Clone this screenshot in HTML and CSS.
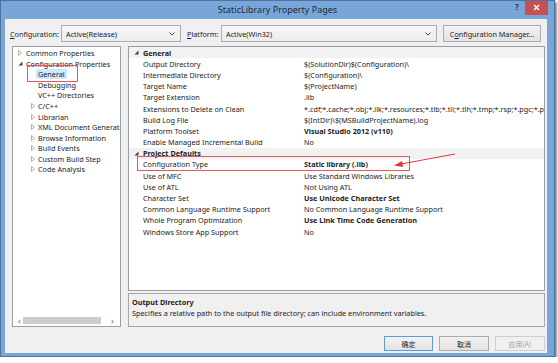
FILE: index.html
```html
<!DOCTYPE html>
<html>
  <head>
    <meta charset="utf-8" />
    <title>StaticLibrary Property Pages</title>
    <link rel="stylesheet" href="styles.css">
  </head>
  <body>
    <div class="window">
      <div class="titlebar">
        <span class="title">StaticLibrary Property Pages</span>
        <div class="caption-btns">
          <span class="help">?</span>
          <span class="close">
            <svg width="7" height="7" viewBox="0 0 7 7"><path d="M1 1L6 6M6 1L1 6" stroke="#fff" stroke-width="1.4"/></svg>
          </span>
        </div>
      </div>

      <div class="client">
        <!-- configuration / platform bar -->
        <div class="toolbar">
          <span class="lbl lbl-config"><u>C</u>onfiguration:</span>
          <div class="combo combo-config">
            <span>Active(Release)</span>
            <svg class="chev" width="6" height="4" viewBox="0 0 6 4"><path d="M0.5 0.5L3 3L5.5 0.5" fill="none" stroke="#555" stroke-width="1"/></svg>
          </div>
          <span class="lbl lbl-platform"><u>P</u>latform:</span>
          <div class="combo combo-platform">
            <span>Active(Win32)</span>
            <svg class="chev" width="6" height="4" viewBox="0 0 6 4"><path d="M0.5 0.5L3 3L5.5 0.5" fill="none" stroke="#555" stroke-width="1"/></svg>
          </div>
          <button class="btn btn-manager">C<u>o</u>nfiguration Manager...</button>
        </div>

        <div class="main">
          <!-- left tree -->
          <div class="tree">
            <ul class="tree-list">
              <li class="lvl0"><span class="tog"><svg width="4" height="6" viewBox="0 0 4 6"><path d="M0.5 0.5L3.5 3L0.5 5.5Z" fill="none" stroke="#a8a8a8" stroke-width="0.9"/></svg></span>Common Properties</li>
              <li class="lvl0"><span class="tog"><svg width="5" height="5" viewBox="0 0 5 5"><path d="M4.5 0.5L4.5 4.5L0.5 4.5Z" fill="#404040"/></svg></span>Configuration Properties</li>
              <li class="lvl1"><span class="tog"></span><span class="selected">General</span></li>
              <li class="lvl1"><span class="tog"></span>Debugging</li>
              <li class="lvl1"><span class="tog"></span>VC++ Directories</li>
              <li class="lvl1"><span class="tog"><svg width="4" height="6" viewBox="0 0 4 6"><path d="M0.5 0.5L3.5 3L0.5 5.5Z" fill="none" stroke="#a8a8a8" stroke-width="0.9"/></svg></span>C/C++</li>
              <li class="lvl1"><span class="tog"><svg width="4" height="6" viewBox="0 0 4 6"><path d="M0.5 0.5L3.5 3L0.5 5.5Z" fill="none" stroke="#a8a8a8" stroke-width="0.9"/></svg></span>Librarian</li>
              <li class="lvl1"><span class="tog"><svg width="4" height="6" viewBox="0 0 4 6"><path d="M0.5 0.5L3.5 3L0.5 5.5Z" fill="none" stroke="#a8a8a8" stroke-width="0.9"/></svg></span>XML Document Generator</li>
              <li class="lvl1"><span class="tog"><svg width="4" height="6" viewBox="0 0 4 6"><path d="M0.5 0.5L3.5 3L0.5 5.5Z" fill="none" stroke="#a8a8a8" stroke-width="0.9"/></svg></span>Browse Information</li>
              <li class="lvl1"><span class="tog"><svg width="4" height="6" viewBox="0 0 4 6"><path d="M0.5 0.5L3.5 3L0.5 5.5Z" fill="none" stroke="#a8a8a8" stroke-width="0.9"/></svg></span>Build Events</li>
              <li class="lvl1"><span class="tog"><svg width="4" height="6" viewBox="0 0 4 6"><path d="M0.5 0.5L3.5 3L0.5 5.5Z" fill="none" stroke="#a8a8a8" stroke-width="0.9"/></svg></span>Custom Build Step</li>
              <li class="lvl1"><span class="tog"><svg width="4" height="6" viewBox="0 0 4 6"><path d="M0.5 0.5L3.5 3L0.5 5.5Z" fill="none" stroke="#a8a8a8" stroke-width="0.9"/></svg></span>Code Analysis</li>
            </ul>
            <div class="hscroll">
              <span class="arrow">&lsaquo;</span>
              <span class="track"><span class="thumb"></span></span>
              <span class="arrow">&rsaquo;</span>
            </div>
            <span class="mark mark-general"></span>
          </div>

          <div class="right">
            <!-- property grid -->
            <div class="grid">
              <div class="cat"><span class="tog"><svg width="5" height="5" viewBox="0 0 5 5"><path d="M4.5 0.5L4.5 4.5L0.5 4.5Z" fill="#404040"/></svg></span>General</div>
              <div class="row"><span class="name">Output Directory</span><span class="val">$(SolutionDir)$(Configuration)\</span></div>
              <div class="row"><span class="name">Intermediate Directory</span><span class="val">$(Configuration)\</span></div>
              <div class="row"><span class="name">Target Name</span><span class="val">$(ProjectName)</span></div>
              <div class="row"><span class="name">Target Extension</span><span class="val">.lib</span></div>
              <div class="row"><span class="name">Extensions to Delete on Clean</span><span class="val">*.cdf;*.cache;*.obj;*.ilk;*.resources;*.tlb;*.tli;*.tlh;*.tmp;*.rsp;*.pgc;*.pgd;*.meta</span></div>
              <div class="row"><span class="name">Build Log File</span><span class="val">$(IntDir)\$(MSBuildProjectName).log</span></div>
              <div class="row"><span class="name">Platform Toolset</span><span class="val bold">Visual Studio 2012 (v110)</span></div>
              <div class="row"><span class="name">Enable Managed Incremental Build</span><span class="val">No</span></div>
              <div class="cat"><span class="tog"><svg width="5" height="5" viewBox="0 0 5 5"><path d="M4.5 0.5L4.5 4.5L0.5 4.5Z" fill="#404040"/></svg></span>Project Defaults</div>
              <div class="row"><span class="name">Configuration Type</span><span class="val bold">Static library (.lib)</span></div>
              <div class="row"><span class="name">Use of MFC</span><span class="val">Use Standard Windows Libraries</span></div>
              <div class="row"><span class="name">Use of ATL</span><span class="val">Not Using ATL</span></div>
              <div class="row"><span class="name">Character Set</span><span class="val bold">Use Unicode Character Set</span></div>
              <div class="row"><span class="name">Common Language Runtime Support</span><span class="val">No Common Language Runtime Support</span></div>
              <div class="row"><span class="name">Whole Program Optimization</span><span class="val bold">Use Link Time Code Generation</span></div>
              <div class="row"><span class="name">Windows Store App Support</span><span class="val">No</span></div>

              <span class="mark mark-type"></span>
              <svg class="arrow-note" width="340" height="130" viewBox="0 0 340 130">
                <path d="M326 107L272 117" stroke="#e0383c" stroke-width="1"/>
                <path d="M265 118.5L273 114L274 120Z" fill="#e0383c"/>
              </svg>
            </div>
            <div class="desc">
              <div class="desc-title">Output Directory</div>
              <div>Specifies a relative path to the output file directory; can include environment variables.</div>
            </div>
          </div>
        </div>

        <div class="actions">
          <button class="btn btn-ok">确定</button>
          <button class="btn btn-cancel">取消</button>
          <button class="btn btn-apply" disabled>应用(A)</button>
        </div>
      </div>
    </div>
  </body>
</html>
```

FILE: styles.css
```css
/* ------------------------------ reset ------------------------------ */
* {
  margin: 0;
  padding: 0;
  box-sizing: border-box;
}

body {
  background: #fff;
  font-family: "Noto Sans", "Noto Sans CJK SC", sans-serif;
  font-size: 7.25px;
  color: #222;
}

ul {
  list-style: none;
}

/* ------------------------------ window frame ------------------------------ */
.window {
  width: 555px;
  height: 357px;
  background: #79a6da;
  border: 1px solid #4f739c;
  box-shadow: 1px 2px 3px rgba(0, 0, 0, 0.75);
  display: flex;
  flex-direction: column;
  overflow: hidden;
}

.titlebar {
  height: 18px;
  display: grid;
  grid-template-columns: 1fr auto 1fr;
}
.title {
  grid-column: 2;
  font-size: 9px;
  line-height: 18px;
  color: #1f2a38;
}
.caption-btns {
  grid-column: 3;
  justify-self: end;
  display: flex;
  align-items: flex-start;
  margin-right: 6px;
  margin-top: -1px;
}
.help {
  width: 10px;
  font-size: 8px;
  font-weight: bold;
  line-height: 14px;
  color: #2a3a4c;
}
.close {
  width: 23px;
  height: 15px;
  background: #c75050;
  display: flex;
  align-items: center;
  justify-content: center;
}

.client {
  flex: 1;
  min-height: 0;
  margin: 0 7px 3px 4px;
  background: #f0f0f0;
  display: flex;
  flex-direction: column;
}

/* ------------------------------ top bar ------------------------------ */
.toolbar {
  display: flex;
  align-items: center;
  height: 17px;
  margin-top: 6px;
  padding-left: 5px;
}
.lbl {
  white-space: nowrap;
  flex: none;
}
.lbl-config {
  width: 51px;
}
.lbl-platform {
  width: 34px;
  margin-left: 6px;
}
.combo {
  flex: none;
  height: 17px;
  border: 1px solid #acacac;
  background: linear-gradient(#f7f7f7, #ececec);
  display: flex;
  align-items: center;
  justify-content: space-between;
  padding: 0 5px 0 4px;
}
.combo-config {
  width: 120px;
}
.combo-platform {
  width: 216px;
}
.btn {
  flex: none;
  font-family: inherit;
  font-size: 7.25px;
  color: #222;
  border: 1px solid #acacac;
  background: linear-gradient(#f2f2f2, #e3e3e3);
  height: 15px;
}
.btn-manager {
  width: 98px;
  height: 17px;
  margin-left: 6px;
}

/* ------------------------------ main area ------------------------------ */
.main {
  display: flex;
  gap: 7px;
  height: 281px;
  flex: none;
  margin-top: 4px;
  padding: 0 2px 0 7px;
}

.tree {
  position: relative;
  flex: none;
  width: 109px;
  background: #fff;
  border: 1px solid #9a9ea6;
  display: flex;
  flex-direction: column;
  overflow: hidden;
}
.tree-list {
  padding-top: 1px;
}
.tree-list li {
  display: flex;
  align-items: center;
  height: 10.55px;
  white-space: nowrap;
}
.tree-list li.lvl0 {
  padding-left: 5px;
}
.tree-list li.lvl1 {
  padding-left: 17px;
}
.tog {
  width: 8px;
  flex: none;
  display: flex;
  align-items: center;
}
.lvl1 .tog {
  padding-left: 1px;
}
.selected {
  background: #cde8ff;
  padding: 0 2px;
  margin-left: -2px;
  line-height: 10px;
}

.hscroll {
  margin-top: auto;
  height: 10px;
  display: flex;
  align-items: center;
  padding: 0 4px 1px 3px;
  color: #606060;
}
.hscroll .arrow {
  width: 7px;
  font-size: 9px;
  line-height: 9px;
  text-align: center;
}
.hscroll .track {
  flex: 1;
  height: 7px;
  padding-right: 8px;
}
.hscroll .thumb {
  display: block;
  height: 7px;
  background: #cdcdcd;
}

.right {
  flex: 1;
  min-width: 0;
  display: flex;
  flex-direction: column;
  gap: 2px;
}

.grid {
  position: relative;
  height: 245px;
  background: #fff;
  border: 1px solid #9a9ea6;
  overflow: hidden;
}
.grid .cat,
.grid .row {
  display: flex;
  align-items: center;
  height: 11.2px;
  white-space: nowrap;
}
.grid .cat {
  background: #f2f2f2;
  font-weight: bold;
  padding-left: 5px;
}
.grid .cat .tog {
  width: 9px;
}
.grid .name {
  width: 175px;
  flex: none;
  padding-left: 14px;
  overflow: hidden;
}
.grid .val {
  overflow: hidden;
}
.bold {
  font-weight: bold;
}

.desc {
  height: 34px;
  border: 1px solid #a8a8a8;
  background: #f0f0f0;
  padding: 3px 0 0 3px;
  line-height: 10.5px;
}
.desc-title {
  font-weight: bold;
}

/* ------------------------------ dialog buttons ------------------------------ */
.actions {
  display: flex;
  justify-content: flex-end;
  gap: 6px;
  margin-top: 9px;
  padding-right: 2px;
}
.actions .btn {
  width: 50px;
  font-family: "Noto Sans CJK SC", sans-serif;
  font-size: 7px;
}
.actions .btn-ok {
  width: 49px;
  border-color: #5b9bd5;
}
.actions .btn-apply {
  color: #a0a0a0;
  border-color: #cfcfcf;
  background: #f0f0f0;
}

/* ------------------------------ red annotations ------------------------------ */
.mark {
  position: absolute;
  border: 1px solid #e0575c;
}
.mark-general {
  left: 14px;
  top: 18px;
  width: 51px;
  height: 17px;
}
.mark-type {
  left: 8px;
  top: 109px;
  width: 273px;
  height: 15px;
}
.arrow-note {
  position: absolute;
  left: 0;
  top: 0;
}
```
